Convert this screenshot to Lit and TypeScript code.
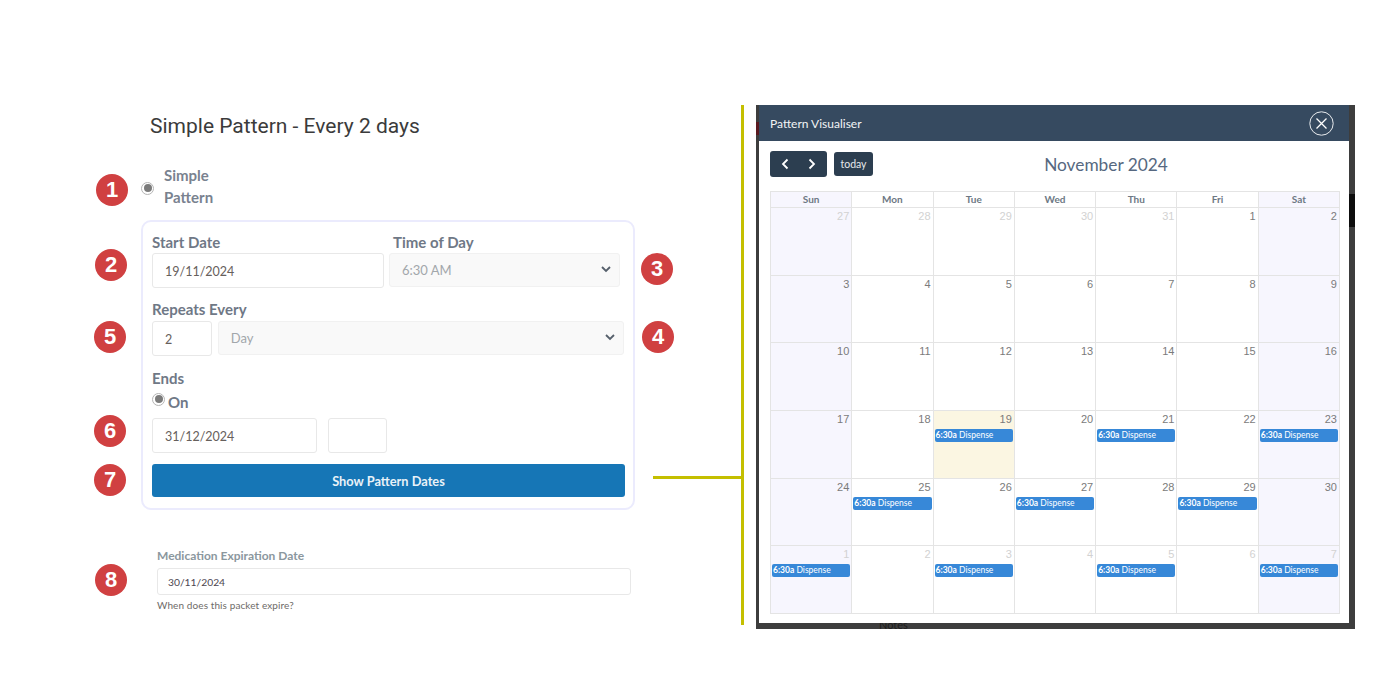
import {html, css, LitElement} from 'lit';
import {customElement} from 'lit/decorators.js';

const chevron = html`<svg class="chev" width="10" height="7" viewBox="0 0 10 7"><path d="M1 1l4 4 4-4" fill="none" stroke="#555f6b" stroke-width="1.8"/></svg>`;

// [day, muted, has event]
type Cell = [number, boolean, boolean];
const weeks: Cell[][] = [
  [[27, true, false], [28, true, false], [29, true, false], [30, true, false], [31, true, false], [1, false, false], [2, false, false]],
  [[3, false, false], [4, false, false], [5, false, false], [6, false, false], [7, false, false], [8, false, false], [9, false, false]],
  [[10, false, false], [11, false, false], [12, false, false], [13, false, false], [14, false, false], [15, false, false], [16, false, false]],
  [[17, false, false], [18, false, false], [19, false, true], [20, false, false], [21, false, true], [22, false, false], [23, false, true]],
  [[24, false, false], [25, false, true], [26, false, false], [27, false, true], [28, false, false], [29, false, true], [30, false, false]],
  [[1, true, true], [2, true, false], [3, true, true], [4, true, false], [5, true, true], [6, true, false], [7, true, true]],
];
const days = ['Sun', 'Mon', 'Tue', 'Wed', 'Thu', 'Fri', 'Sat'];
const badges = [
  [1, 112, 190], [2, 111, 265], [3, 657, 269], [4, 658, 337],
  [5, 110, 337], [6, 110, 431], [7, 110, 480], [8, 111, 580],
];

@customElement('app-root')
export class AppRoot extends LitElement {
  static styles = css`
    :host{display:block;width:1400px;height:700px;position:relative;background:#fff;overflow:hidden;font-family:Lato,sans-serif}
    .page{display:flex;align-items:flex-start;padding-top:105px;padding-left:141px}

    .left{width:494px;flex:none;margin-right:121px}
    h1{margin:0 0 0 9px;font:400 21px/42px Roboto,sans-serif;color:#3b3b3b}
    .radio-row{display:flex;align-items:center;margin-top:17px;height:44px}
    .radio{width:13px;height:13px;border-radius:50%;border:1px solid #b5b5b5;box-sizing:border-box;background:#fff;display:flex;align-items:center;justify-content:center;flex:none}
    .radio::after{content:'';width:8px;height:8px;border-radius:50%;background:#7b7b7b}
    .radio-row .radio{margin-top:4px}
    .radio-row .label{margin-left:10px;font-size:15px;font-weight:700;line-height:22px;color:#79828f}
    .card{box-sizing:border-box;height:290px;margin-top:12px;border:2px solid #ebebfd;border-radius:10px;padding:10px 9px 0}
    .row{display:flex}
    .lbl{font-size:15px;font-weight:700;line-height:20px;color:#6f7886}
    .field{box-sizing:border-box;border:1px solid #e8e8e8;border-radius:3px;background:#fff;font-size:12.5px;color:#66605c;display:flex;align-items:center;padding:2px 0 0 12px}
    .select{box-sizing:border-box;border:1px solid #f1f1f1;border-radius:3px;background:#f9f9f9;font-size:13px;color:#a2a7ab;display:flex;align-items:center;justify-content:space-between;padding:0 8px 0 12px}
    .chev{margin-top:-2px}
    .on{display:flex;align-items:center;height:20px;margin-top:2px;font-size:15px;font-weight:700;color:#6f7886}
    .on .txt{margin-left:3px;padding-top:3px}
    .on .radio{margin-top:-2px}
    .show{display:flex;align-items:center;justify-content:center;box-sizing:border-box;width:473px;height:33px;margin-top:11px;background:#1676b6;border-radius:3px;color:#e9f2f8;font-size:12.8px;font-weight:700}

    .expiry{margin:36px 0 0 16px;width:474px}
    .expiry .t{font-size:12px;font-weight:700;line-height:20px;color:#8b979e}
    .expiry .field{height:27px;margin-top:2px;font-size:10.3px;padding:0 0 0 10px;color:#4c4650}
    .expiry .help{font-size:10px;line-height:20px;color:#6e6b68;letter-spacing:.1px}

    .modal-wrap{position:relative;box-sizing:border-box;width:599px;height:524px;background:#3d3d3d;padding:0 6px 6px 3px;flex:none}
    .modal{background:#fff;height:518px;position:relative}
    .head{height:36px;background:#364a60;display:flex;align-items:center;justify-content:space-between;padding:0 15px 0 11px;color:#f2f4f6;font-size:12px}
    .cal{padding:10px 9px 0 11px}
    .bar{display:flex;align-items:center;height:26px;position:relative}
    .group{display:flex;width:57px;height:26px;background:#2c3e50;border-radius:3px;align-items:center;justify-content:space-around;padding:0 3px;box-sizing:border-box}
    .today{display:flex;align-items:center;justify-content:center;margin-left:7px;width:39px;height:24px;background:#2c3e50;border-radius:3px;color:#e6e9ec;font-size:10.5px}
    .month{position:absolute;left:0;text-align:center;font-size:17.3px;color:#566880;box-sizing:border-box;width:570px;padding-left:102px}
    .grid{display:grid;grid-template-columns:repeat(7,1fr);grid-template-rows:16px repeat(6,67.67px);width:570px;margin-top:14px;border-top:1px solid #e4e4e4;border-left:1px solid #e4e4e4;box-sizing:border-box}
    .grid>div{border-right:1px solid #e4e4e4;border-bottom:1px solid #e4e4e4;min-width:0;box-sizing:border-box}
    .dow{text-align:center;font-size:10px;font-weight:700;line-height:15px;color:#6d7884}
    .we{background:#f7f6fe}
    .now{background:#fbf6e2}
    .num{text-align:right;padding:2px 2px 0 0;font:11px/13px "Liberation Sans",sans-serif;color:#7b7b7b}
    .muted{color:#d2d2d2}
    .ev{margin:3px 1px 0 1px;height:13px;background:#3788d8;border-radius:2px;color:#fff;font-size:8.5px;line-height:13px;padding-left:1px;white-space:nowrap;overflow:hidden}
    .ev b{font-weight:700}

    .scrap{position:absolute}
    .s-black{right:0;width:6px;top:89px;height:33px;background:#0d0d0d}
    .s-red{left:0;width:3px;top:17px;height:13px;background:#5a1a20}
    .notes{position:absolute;left:123px;bottom:-1px;font-size:11px;line-height:11px;color:#1c1c1c}

    .badge{position:absolute;width:32px;height:32px;margin:-16px 0 0 -16px;border-radius:50%;background:#d04041;color:#fff;font:700 22px/32px "Liberation Sans",sans-serif;text-align:center}
    .line{position:absolute;background:#c4bf00}
    .v{left:741px;top:105px;width:3px;height:520px}
    .h{left:653px;top:476px;width:90px;height:3px}
  `;

  render() {
    return html`
      <div class="page">
        <div class="left">
          <h1>Simple Pattern - Every 2 days</h1>
          <div class="radio-row"><span class="radio"></span><span class="label">Simple<br />Pattern</span></div>
          <div class="card">
            <div class="row" style="gap:5px">
              <div>
                <div class="lbl" style="margin-bottom:1px">Start Date</div>
                <div class="field" style="width:232px;height:35px">19/11/2024</div>
              </div>
              <div>
                <div class="lbl" style="padding-left:4px;margin-bottom:1px">Time of Day</div>
                <div class="select" style="width:231px;height:34px"><span>6:30 AM</span>${chevron}</div>
              </div>
            </div>
            <div class="lbl" style="margin-top:11px">Repeats Every</div>
            <div class="row" style="gap:6px;margin-top:2px">
              <div class="field" style="width:60px;height:35px">2</div>
              <div class="select" style="width:408px;height:34px"><span>Day</span>${chevron}</div>
            </div>
            <div class="lbl" style="margin-top:12px">Ends</div>
            <div class="on"><span class="radio"></span><span class="txt">On</span></div>
            <div class="row" style="gap:11px;margin-top:8px">
              <div class="field" style="width:165px;height:35px">31/12/2024</div>
              <div class="field" style="width:59px;height:35px"></div>
            </div>
            <div class="show">Show Pattern Dates</div>
          </div>
          <div class="expiry">
            <div class="t">Medication Expiration Date</div>
            <div class="field">30/11/2024</div>
            <div class="help">When does this packet expire?</div>
          </div>
        </div>
        <div class="modal-wrap">
          <span class="scrap s-black"></span>
          <span class="scrap s-red"></span>
          <span class="notes">Notes</span>
          <div class="modal">
            <div class="head">
              <span>Pattern Visualiser</span>
              <svg width="25" height="25" viewBox="0 0 25 25"><circle cx="12.5" cy="12.5" r="11.7" fill="none" stroke="#e8ebee" stroke-width="1"/><path d="M7.5 7.5l10 10M17.5 7.5l-10 10" stroke="#fff" stroke-width="1.3"/></svg>
            </div>
            <div class="cal">
              <div class="bar">
                <div class="group">
                  <svg width="9" height="12" viewBox="0 0 9 12"><path d="M6.5 1.5L2 6l4.5 4.5" fill="none" stroke="#fff" stroke-width="1.8"/></svg>
                  <svg width="9" height="12" viewBox="0 0 9 12"><path d="M2.5 1.5L7 6l-4.5 4.5" fill="none" stroke="#fff" stroke-width="1.8"/></svg>
                </div>
                <div class="today">today</div>
                <div class="month">November 2024</div>
              </div>
              <div class="grid">
                ${days.map((d, i) => html`<div class="dow ${i === 0 || i === 6 ? 'we' : ''}">${d}</div>`)}
                ${weeks.map((w) => w.map(([n, muted, ev], i) => html`
                  <div class="${i === 0 || i === 6 ? 'we' : ''} ${n === 19 ? 'now' : ''}">
                    <div class="num ${muted ? 'muted' : ''}">${n}</div>
                    ${ev ? html`<div class="ev"><b>6:30a</b> Dispense</div>` : ''}
                  </div>`))}
              </div>
            </div>
          </div>
        </div>
      </div>
      <span class="line v"></span>
      <span class="line h"></span>
      ${badges.map(([n, x, y]) => html`<span class="badge" style="left:${x}px;top:${y}px">${n}</span>`)}
    `;
  }
}
